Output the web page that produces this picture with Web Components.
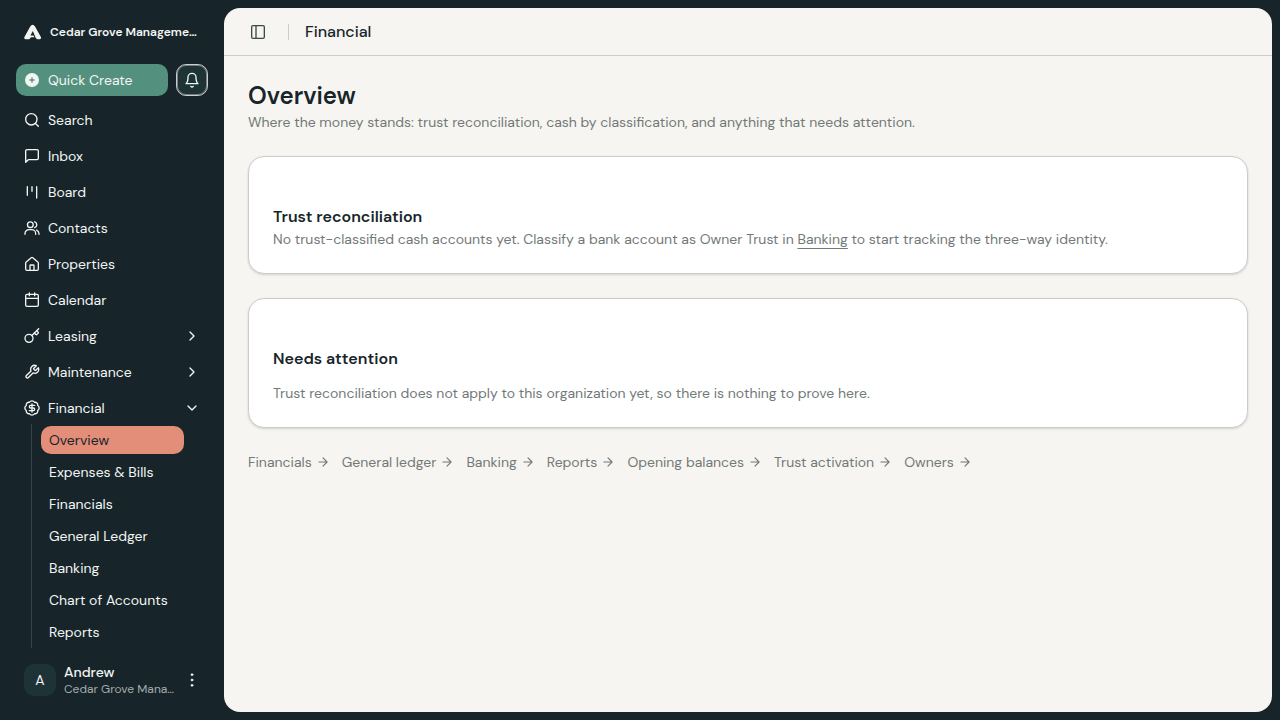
<!DOCTYPE html>
<html lang="en">
<head>
<meta charset="utf-8">
<meta name="viewport" content="width=device-width, initial-scale=1">
<title>Financial overview</title>
<style>
  :root {
    --ink: #17252a;
    --paper: #f7f5f1;
    --muted: #727978;
    --line: #cccccb;
    --accent: #53917e;
    --active: #e28e79;
    --on-dark: #f3f5f4;
  }
  html, body { height: 100%; }
  body {
    margin: 0;
    background: var(--ink);
    color: var(--ink);
    font: 14px/20px "DM Sans", Inter, "Open Sans", sans-serif;
    -webkit-font-smoothing: antialiased;
  }
</style>
</head>
<body>
<app-shell>
  <app-sidebar slot="sidebar"></app-sidebar>
  <page-header slot="header">Financial</page-header>
  <page-title heading="Overview">Where the money stands: trust reconciliation, cash by classification, and anything that needs attention.</page-title>
  <info-card heading="Trust reconciliation">No trust-classified cash accounts yet. Classify a bank account as Owner Trust in <text-link href="#banking">Banking</text-link> to start tracking the three-way identity.</info-card>
  <info-card heading="Needs attention" spaced>Trust reconciliation does not apply to this organization yet, so there is nothing to prove here.</info-card>
  <quick-links></quick-links>
</app-shell>

<script>
const ICONS = {
  search: '<circle cx="11" cy="11" r="8.500"/><path d="m21.500 21.500-4.300-4.300"/>',
  inbox: '<path d="M21.500 15.500a2 2 0 0 1-2 2H6.500l-4 4V4.500a2 2 0 0 1 2-2h15a2 2 0 0 1 2 2z"/>',
  board: '<path d="M5 4v13M12 4v7M19 4v17"/>',
  contacts: '<path d="M1.500 21.500v-1a6 6 0 0 1 6-6h4a6 6 0 0 1 6 6v1"/><circle cx="9.500" cy="7" r="4.300"/><path d="M16 2.700a4.500 4.500 0 0 1 0 8.600M22.500 21.500v-1a6 6 0 0 0-3.500-5.400"/>',
  home: '<path d="M15 21.500v-7a1 1 0 0 0-1-1h-4a1 1 0 0 0-1 1v7"/><path d="M2.500 10.500a2 2 0 0 1 .8-1.600l7.500-6.300a2 2 0 0 1 2.400 0l7.500 6.300a2 2 0 0 1 .8 1.600v9a2 2 0 0 1-2 2H4.500a2 2 0 0 1-2-2z"/>',
  calendar: '<path d="M8 1.500v4M16 1.500v4"/><rect width="19" height="18" x="2.500" y="3.500" rx="2"/><path d="M2.500 9.500h19"/>',
  key: '<path d="m15.500 7.500 2.300 2.300a1 1 0 0 0 1.400 0l2.100-2.100a1 1 0 0 0 0-1.400L19 4"/><path d="m22 1-10.500 10.500"/><circle cx="7.500" cy="15.500" r="6"/>',
  wrench: '<path d="M14.7 6.3a1 1 0 0 0 0 1.400l1.600 1.600a1 1 0 0 0 1.400 0l3.770-3.770a6 6 0 0 1-7.940 7.940l-6.910 6.910a2.120 2.120 0 0 1-3-3l6.910-6.910a6 6 0 0 1 7.940-7.940l-3.760 3.760z"/>',
  dollar: '<path d="M3.400 8.300a4.200 4.200 0 0 1 4.900-4.900 4.300 4.300 0 0 1 7.400 0 4.200 4.200 0 0 1 4.900 4.900 4.300 4.300 0 0 1 0 7.400 4.200 4.200 0 0 1-4.900 4.900 4.300 4.300 0 0 1-7.400 0 4.200 4.200 0 0 1-4.900-4.900 4.300 4.300 0 0 1 0-7.400Z"/><path d="M16 8h-6a2 2 0 1 0 0 4h4a2 2 0 1 1 0 4H8M12 18V6"/>',
  right: '<path d="m9 18 6-6-6-6"/>',
  down: '<path d="m6 9 6 6 6-6"/>',
  arrow: '<path d="M5 12h14M12 5l7 7-7 7"/>',
  bell: '<path d="M10.300 21.500a2 2 0 0 0 3.400 0"/><path d="M6 8a6 6 0 0 1 12 0c0 7 3 9.500 3 9.500H3s3-2.500 3-9.500"/>',
  panel: '<rect width="19" height="19" x="2.500" y="2.500" rx="2"/><path d="M9 2.500v19"/>',
  plus: '<circle cx="12" cy="12" r="10.500" fill="currentColor" stroke="none"/><path d="M12 9v6M9 12h6" stroke="#53917e"/>',
  more: '<g fill="currentColor" stroke-width="1"><circle cx="12" cy="4" r="1.500"/><circle cx="12" cy="12" r="1.500"/><circle cx="12" cy="20" r="1.500"/></g>',
  logo: '<path d="M8.300 4.800Q11.500 0 14.700 4.800L22.500 18.500Q23.500 21.500 21 21.500H18Q16.500 21.500 15.700 20L11.800 10.500 8.600 16.800H12.500L14 19 9.500 19 7 21.500H2Q-.5 21.500 .6 18.500Z" fill="currentColor" stroke="none"/>'
};

function define(name, html, setup) {
  const template = document.createElement('template');
  template.innerHTML = '<style>*{box-sizing:border-box}:host{display:block}a,button{font:inherit;color:inherit;text-decoration:none}</style>' + html;
  customElements.define(name, class extends HTMLElement {
    connectedCallback() {
      if (this.shadowRoot) return;
      this.attachShadow({ mode: 'open' }).append(template.content.cloneNode(true));
      if (setup) setup(this, this.shadowRoot);
    }
  });
}

define('ui-icon', `<style>
  :host{display:block;flex:none;width:16px;height:16px}
  :host([size="sm"]){width:14px;height:14px}
  :host([size="lg"]){width:18px;height:18px}
  svg{display:block;width:100%;height:100%}
</style><svg viewBox="0 0 24 24" fill="none" stroke="currentColor" stroke-width="2" stroke-linecap="round" stroke-linejoin="round" aria-hidden="true"></svg>`,
  (host, root) => { root.querySelector('svg').innerHTML = ICONS[host.getAttribute('name')]; });

define('app-shell', `<style>
  :host{display:grid;grid-template-columns:224px minmax(0,1fr);height:100vh}
  .panel{margin:8px 8px 8px 0;background:var(--paper);border-radius:16px;overflow:hidden;display:flex;flex-direction:column}
  main{display:flex;flex-direction:column;gap:24px;padding:24px;overflow:auto;flex:1}
</style><slot name="sidebar"></slot>
<div class="panel"><slot name="header"></slot><main><slot></slot></main></div>`);

define('page-header', `<style>
  header{display:flex;align-items:center;height:48px;padding:0 24px 0 22px;gap:16px;border-bottom:1px solid var(--line)}
  button{display:grid;place-items:center;width:24px;height:24px;padding:0;border:0;background:none;color:#3b484c}
  .rule{width:1px;height:16px;margin-left:2px;background:var(--line)}
  h1{margin:0;font-size:16px;line-height:24px;font-weight:500}
</style><header><button type="button" aria-label="Toggle sidebar"><ui-icon name="panel"></ui-icon></button><span class="rule"></span><h1><slot></slot></h1></header>`);

define('page-title', `<style>
  h2{margin:0;font-size:24px;line-height:32px;font-weight:600}
  p{margin:0;color:var(--muted)}
</style><h2></h2><p><slot></slot></p>`,
  (host, root) => { root.querySelector('h2').textContent = host.getAttribute('heading'); });

define('info-card', `<style>
  section{padding:48px 24px 24px;background:#fff;border:1px solid var(--line);border-radius:16px;box-shadow:0 1px 3px #0000001a,0 1px 2px #0000000d}
  h3{margin:0;font-size:16px;line-height:24px;font-weight:600}
  p{margin:0;color:var(--muted)}
  :host([spaced]) p{margin-top:12px}
</style><section><h3></h3><p><slot></slot></p></section>`,
  (host, root) => { root.querySelector('h3').textContent = host.getAttribute('heading'); });

define('text-link', `<style>
  :host{display:inline}
  a{text-decoration:underline;text-underline-offset:4px}
</style><a><slot></slot></a>`,
  (host, root) => { root.querySelector('a').href = host.getAttribute('href'); });

define('quick-links', `<style>
  nav{display:flex;flex-wrap:wrap;gap:8px 12px;color:var(--muted)}
  a{display:flex;align-items:center;gap:4px}
</style><nav aria-label="Financial pages"></nav>`,
  (host, root) => {
    root.querySelector('nav').innerHTML = ['Financials', 'General ledger', 'Banking', 'Reports', 'Opening balances', 'Trust activation', 'Owners']
      .map(t => `<a href="#${t.toLowerCase().replace(' ', '-')}">${t}<ui-icon name="arrow" size="sm"></ui-icon></a>`).join('');
  });

define('nav-item', `<style>
  a{display:flex;align-items:center;gap:8px;height:32px;padding:0 8px;border-radius:10px}
  span{flex:1}
</style><a href="#"><span><slot></slot></span></a>`,
  (host, root) => {
    const link = root.querySelector('a');
    const arrow = host.getAttribute('arrow');
    link.insertAdjacentHTML('afterbegin', `<ui-icon name="${host.getAttribute('icon')}"></ui-icon>`);
    if (arrow) link.insertAdjacentHTML('beforeend', `<ui-icon name="${arrow}"></ui-icon>`);
  });

define('sub-item', `<style>
  a{display:flex;align-items:center;height:28px;padding:0 8px;border-radius:10px}
  :host([active]) a{background:var(--active);color:var(--ink)}
</style><a href="#"><slot></slot></a>`);

define('user-card', `<style>
  button{display:flex;align-items:center;gap:8px;width:100%;height:48px;padding:0 8px;border:0;background:none;text-align:left}
  .avatar{display:grid;place-items:center;flex:none;width:32px;height:32px;border-radius:10px;background:#1e3338}
  .who{flex:1;min-width:0}
  .who span{display:block;white-space:nowrap;overflow:hidden}
  .name{font-weight:500;line-height:17px}
  .org{font-size:12px;line-height:16px;color:#a4abac}
</style><button type="button"><span class="avatar">A</span><span class="who"><span class="name">Andrew</span><span class="org">Cedar Grove Mana…</span></span><ui-icon name="more"></ui-icon></button>`);

define('app-sidebar', `<style>
  :host{display:flex;flex-direction:column;min-height:0;padding:8px 16px 16px;color:var(--on-dark)}
  .brand{display:flex;align-items:center;gap:8px;height:48px;padding-left:8px;font-size:12px;font-weight:600;white-space:nowrap}
  .actions{display:flex;gap:8px;margin:8px 0}
  .create{flex:1;display:flex;align-items:center;gap:8px;height:32px;padding:0 8px;border:0;border-radius:10px;background:var(--accent)}
  .bell{display:grid;place-items:center;width:32px;height:32px;padding:0;border:1px solid var(--line);border-radius:10px;background:#1e3338;box-shadow:inset 0 0 0 1px #cccccb80}
  nav{flex:1;min-height:0;overflow:hidden;display:flex;flex-direction:column;gap:4px}
  .sub{display:flex;flex-direction:column;gap:4px;margin:-4px 24px 0 15px;padding:2px 0 2px 9px;border-left:1px solid #34454a}
</style>
<div class="brand"><ui-icon name="logo" size="lg"></ui-icon><span>Cedar Grove Manageme…</span></div>
<div class="actions"><button class="create" type="button"><ui-icon name="plus"></ui-icon>Quick Create</button><button class="bell" type="button" aria-label="Notifications"><ui-icon name="bell"></ui-icon></button></div>
<nav aria-label="Main">
  <nav-item icon="search">Search</nav-item>
  <nav-item icon="inbox">Inbox</nav-item>
  <nav-item icon="board">Board</nav-item>
  <nav-item icon="contacts">Contacts</nav-item>
  <nav-item icon="home">Properties</nav-item>
  <nav-item icon="calendar">Calendar</nav-item>
  <nav-item icon="key" arrow="right">Leasing</nav-item>
  <nav-item icon="wrench" arrow="right">Maintenance</nav-item>
  <nav-item icon="dollar" arrow="down">Financial</nav-item>
  <div class="sub">
    <sub-item active>Overview</sub-item>
    <sub-item>Expenses &amp; Bills</sub-item>
    <sub-item>Financials</sub-item>
    <sub-item>General Ledger</sub-item>
    <sub-item>Banking</sub-item>
    <sub-item>Chart of Accounts</sub-item>
    <sub-item>Reports</sub-item>
  </div>
</nav>
<user-card></user-card>`);
</script>
</body>
</html>
